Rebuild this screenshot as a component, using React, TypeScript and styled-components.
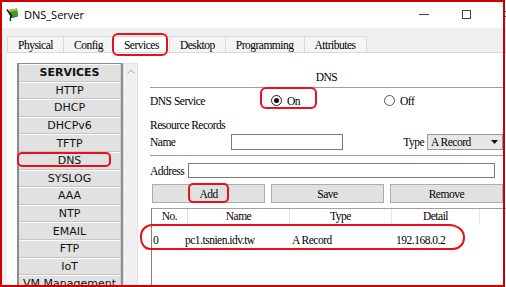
import React from 'react';
import styled, { createGlobalStyle } from 'styled-components';

const SERIF = `"Liberation Serif", "Times New Roman", serif`;

const GlobalStyle = createGlobalStyle`
  html, body { margin: 0; padding: 0; background: #fff; }
  #root { width: 506px; height: 287px; }
`;

const Frame = styled.div`
  position: relative;
  width: 506px;
  height: 287px;
  overflow: hidden;
  background: #fff;
`;

const Window = styled.div`
  display: flex;
  flex-direction: column;
  width: 506px;
  height: 287px;
`;

const TitleBar = styled.div`
  height: 28px;
  flex: none;
  display: flex;
  align-items: center;
  padding-left: 5px;
  background: #fff;
`;

const TitleText = styled.span`
  margin-left: 5px;
  font-family: "Open Sans", "Liberation Sans", sans-serif;
  font-size: 11px;
  color: #000;
`;

const Controls = styled.div`
  margin-left: auto;
  margin-right: -23px;
  display: flex;
  height: 100%;
`;

const CaptionButton = styled.div`
  width: 42px;
  display: flex;
  align-items: center;
  justify-content: center;
`;

const MinGlyph = styled.div`
  width: 10px;
  height: 1px;
  background: #444;
`;

const MaxGlyph = styled.div`
  width: 9px;
  height: 9px;
  box-sizing: border-box;
  border: 1px solid #444;
`;

const Body = styled.div`
  flex: 1;
  min-height: 0;
  display: flex;
  flex-direction: column;
  background: #f0f0f0;
  padding-left: 7px;
`;

const TabStrip = styled.div`
  height: 24px;
  flex: none;
  display: flex;
  align-items: flex-end;
  border-bottom: 1px solid #d9d9d9;
`;

const Tab = styled.div<{ $active?: boolean }>`
  height: 15px;
  padding: 0 10px;
  margin-left: -1px;
  border: 1px solid #d9d9d9;
  border-bottom: none;
  background: ${(p) => (p.$active ? '#ffffff' : '#f4f4f4')};
  display: flex;
  align-items: center;
  font-family: ${SERIF};
  font-size: 11.5px;
  letter-spacing: -0.5px;
  color: #000;
  &:first-child { margin-left: 0; }
`;

const Panel = styled.div`
  flex: 1;
  min-height: 0;
  display: flex;
  background: #fff;
  overflow: hidden;
`;

const Sidebar = styled.div`
  flex: none;
  display: flex;
  padding: 10px 0 0 10px;
`;

const ServiceList = styled.div`
  width: 106px;
  box-sizing: border-box;
  border: 2px solid #8c8c8c;
  border-top-width: 1px;
  border-bottom: none;
  display: flex;
  flex-direction: column;
  background: #f4f4f4;
`;

const ServiceItem = styled.div<{ $header?: boolean }>`
  flex: none;
  height: 17.6px;
  box-sizing: border-box;
  background: #e1e1e1;
  border-top: 1px solid #fbfbfb;
  border-bottom: 1px solid #c6c6c6;
  border-right: 1px solid #cfcfcf;
  display: flex;
  align-items: center;
  justify-content: center;
  font-family: "DejaVu Sans", Verdana, sans-serif;
  font-size: 11px;
  font-weight: ${(p) => (p.$header ? 700 : 400)};
  color: #111;
  white-space: nowrap;
`;

const ScrollTrack = styled.div`
  width: 15px;
  box-sizing: border-box;
  background: #f0f0f0;
  border: 1px solid #e2e2e2;
  display: flex;
  justify-content: center;
  align-items: flex-start;
  padding-top: 5px;
`;

const Main = styled.div`
  flex: 1;
  min-width: 0;
  margin-left: 12px;
  padding-right: 3px;
  display: flex;
  flex-direction: column;
  font-family: ${SERIF};
  font-size: 11.5px;
  letter-spacing: -0.5px;
  color: #000;
`;

const SectionTitle = styled.div`
  margin-top: 17px;
  height: 14px;
  line-height: 14px;
  text-align: center;
`;

const Rule = styled.div<{ $gap: number }>`
  margin-top: ${(p) => p.$gap}px;
  height: 1px;
  flex: none;
  background: #a0a0a0;
`;

const ServiceRow = styled.div`
  height: 25px;
  display: grid;
  grid-template-columns: 121px 113px 1fr;
  align-items: center;
`;

const RadioLabel = styled.label`
  display: flex;
  align-items: center;
  gap: 5px;
`;

const RadioCircle = styled.span<{ $checked?: boolean }>`
  width: 11px;
  height: 11px;
  box-sizing: border-box;
  border-radius: 50%;
  border: 1px solid ${(p) => (p.$checked ? '#222' : '#555')};
  background: #fff;
  display: flex;
  align-items: center;
  justify-content: center;
  &::after {
    content: '';
    width: 5px;
    height: 5px;
    border-radius: 50%;
    background: ${(p) => (p.$checked ? '#111' : 'transparent')};
  }
`;

const SubHeading = styled.div`
  margin-top: 5px;
  height: 14px;
  line-height: 14px;
`;

const FieldRow = styled.div<{ $gap: number; $h: number }>`
  margin-top: ${(p) => p.$gap}px;
  height: ${(p) => p.$h}px;
  display: flex;
  align-items: center;
`;

const FieldLabel = styled.span<{ $w?: number }>`
  flex: none;
  width: ${(p) => (p.$w ? `${p.$w}px` : 'auto')};
`;

const TextInput = styled.div<{ $w: number; $h: number }>`
  flex: none;
  width: ${(p) => p.$w}px;
  height: ${(p) => p.$h}px;
  box-sizing: border-box;
  border: 1px solid #7a7a7a;
  background: #fff;
`;

const TypeLabel = styled.span`
  margin-left: auto;
  margin-right: 3px;
`;

const SelectBox = styled.div`
  flex: none;
  width: 76px;
  height: 16px;
  box-sizing: border-box;
  border: 1px solid #9a9a9a;
  background: #e7e7e7;
  display: flex;
  align-items: center;
  padding: 0 4px 0 3px;
  justify-content: space-between;
`;

const ButtonRow = styled.div`
  margin-top: 6px;
  margin-left: 2px;
  height: 19px;
  display: grid;
  grid-template-columns: repeat(3, 1fr);
  column-gap: 5.5px;
`;

const Button = styled.div`
  box-sizing: border-box;
  border: 1px solid #adadad;
  background: #e1e1e1;
  display: flex;
  align-items: center;
  justify-content: center;
`;

const Table = styled.div`
  margin-top: 5px;
  margin-left: 1px;
  margin-right: -3px;
  flex: 1;
  border-left: 1px solid #828282;
  border-top: 1px solid #a0a0a0;
  background: #fff;
`;

const HeaderRow = styled.div`
  height: 14px;
  display: grid;
  grid-template-columns: 36px 102px 102px 88px 1fr;
`;

const HeadCell = styled.div`
  border-right: 1px solid #e3e3e3;
  text-align: center;
  line-height: 14px;
  &:last-child { border-right: none; }
`;

const DataRow = styled.div`
  height: 34px;
  display: grid;
  grid-template-columns: 33px 107px 104px 1fr;
  align-items: center;
`;

const DataCell = styled.div`
  white-space: nowrap;
  &:first-child { padding-left: 1px; }
`;

const WindowBorder = styled.div`
  position: absolute;
  left: 0;
  top: 0;
  width: 505px;
  height: 287px;
  box-sizing: border-box;
  border: 2px solid #d00000;
  pointer-events: none;
`;

const Annotation = styled.div<{ $x: number; $y: number; $w: number; $h: number; $r?: string }>`
  position: absolute;
  left: ${(p) => p.$x}px;
  top: ${(p) => p.$y}px;
  width: ${(p) => p.$w}px;
  height: ${(p) => p.$h}px;
  box-sizing: border-box;
  border: 2px solid #e8101a;
  border-radius: ${(p) => p.$r ?? '6px'};
  pointer-events: none;
`;

const AppIcon = () => (
  <svg width="14" height="15" viewBox="0 0 14 15">
    <path d="M4 3 L12 1.5 L13 9.5 L5.5 11.5 Z" fill="#2d7a2a" />
    <path d="M4 3 L12 1.5 L12.3 3.6 L4.4 5.2 Z" fill="#c9b21a" />
    <path d="M7 5 L12.5 4 L12.8 8.5 L7.5 9.8 Z" fill="#3e9a36" />
    <path d="M2 2.5 L6.5 9.5" stroke="#1a1a1a" strokeWidth="1.4" fill="none" />
    <path d="M6.5 9.5 C5 10.5 4.5 12.5 6 14" stroke="#1a1a1a" strokeWidth="1.2" fill="none" />
  </svg>
);

const services = ['HTTP', 'DHCP', 'DHCPv6', 'TFTP', 'DNS', 'SYSLOG', 'AAA', 'NTP', 'EMAIL', 'FTP', 'IoT', 'VM Management'];
const tabs = ['Physical', 'Config', 'Services', 'Desktop', 'Programming', 'Attributes'];

export default function App() {
  return (
    <>
      <GlobalStyle />
      <Frame>
        <Window>
          <TitleBar>
            <AppIcon />
            <TitleText>DNS_Server</TitleText>
            <Controls>
              <CaptionButton><MinGlyph /></CaptionButton>
              <CaptionButton><MaxGlyph /></CaptionButton>
              <CaptionButton>
                <svg width="10" height="10" viewBox="0 0 10 10">
                  <path d="M0.5 0.5 L9.5 9.5 M9.5 0.5 L0.5 9.5" stroke="#444" strokeWidth="1" />
                </svg>
              </CaptionButton>
            </Controls>
          </TitleBar>
          <Body>
            <TabStrip>
              {tabs.map((t) => (
                <Tab key={t} $active={t === 'Services'}>{t}</Tab>
              ))}
            </TabStrip>
            <Panel>
              <Sidebar>
                <ServiceList>
                  <ServiceItem $header>SERVICES</ServiceItem>
                  {services.map((s) => (
                    <ServiceItem key={s}>{s}</ServiceItem>
                  ))}
                </ServiceList>
                <ScrollTrack>
                  <svg width="8" height="5" viewBox="0 0 8 5">
                    <path d="M0.5 4.5 L4 1 L7.5 4.5" stroke="#a8a8a8" strokeWidth="1" fill="none" />
                  </svg>
                </ScrollTrack>
              </Sidebar>
              <Main>
                <SectionTitle>DNS</SectionTitle>
                <Rule $gap={3} />
                <ServiceRow>
                  <span>DNS Service</span>
                  <RadioLabel><RadioCircle $checked />On</RadioLabel>
                  <RadioLabel><RadioCircle />Off</RadioLabel>
                </ServiceRow>
                <SubHeading>Resource Records</SubHeading>
                <FieldRow $gap={2} $h={16}>
                  <FieldLabel $w={81}>Name</FieldLabel>
                  <TextInput $w={112} $h={16} />
                  <TypeLabel>Type</TypeLabel>
                  <SelectBox>
                    <span>A Record</span>
                    <svg width="7" height="4" viewBox="0 0 7 4">
                      <path d="M0 0 L7 0 L3.5 4 Z" fill="#111" />
                    </svg>
                  </SelectBox>
                </FieldRow>
                <Rule $gap={5} />
                <FieldRow $gap={7} $h={15}>
                  <FieldLabel $w={38}>Address</FieldLabel>
                  <TextInput $w={307} $h={15} />
                </FieldRow>
                <ButtonRow>
                  <Button>Add</Button>
                  <Button>Save</Button>
                  <Button>Remove</Button>
                </ButtonRow>
                <Table>
                  <HeaderRow>
                    <HeadCell>No.</HeadCell>
                    <HeadCell>Name</HeadCell>
                    <HeadCell>Type</HeadCell>
                    <HeadCell>Detail</HeadCell>
                    <HeadCell />
                  </HeaderRow>
                  <DataRow>
                    <DataCell>0</DataCell>
                    <DataCell>pc1.tsnien.idv.tw</DataCell>
                    <DataCell>A Record</DataCell>
                    <DataCell>192.168.0.2</DataCell>
                  </DataRow>
                </Table>
              </Main>
            </Panel>
          </Body>
        </Window>
        <WindowBorder />
        <Annotation $x={112} $y={33} $w={56} $h={23} />
        <Annotation $x={17} $y={152} $w={94} $h={15} $r="5px" />
        <Annotation $x={260} $y={87} $w={57} $h={22} />
        <Annotation $x={188} $y={183} $w={41} $h={20} $r="5px" />
        <Annotation $x={140} $y={224} $w={325} $h={26} $r="12px 16px 12px 10px / 12px 13px 12px 12px" />
      </Frame>
    </>
  );
}
